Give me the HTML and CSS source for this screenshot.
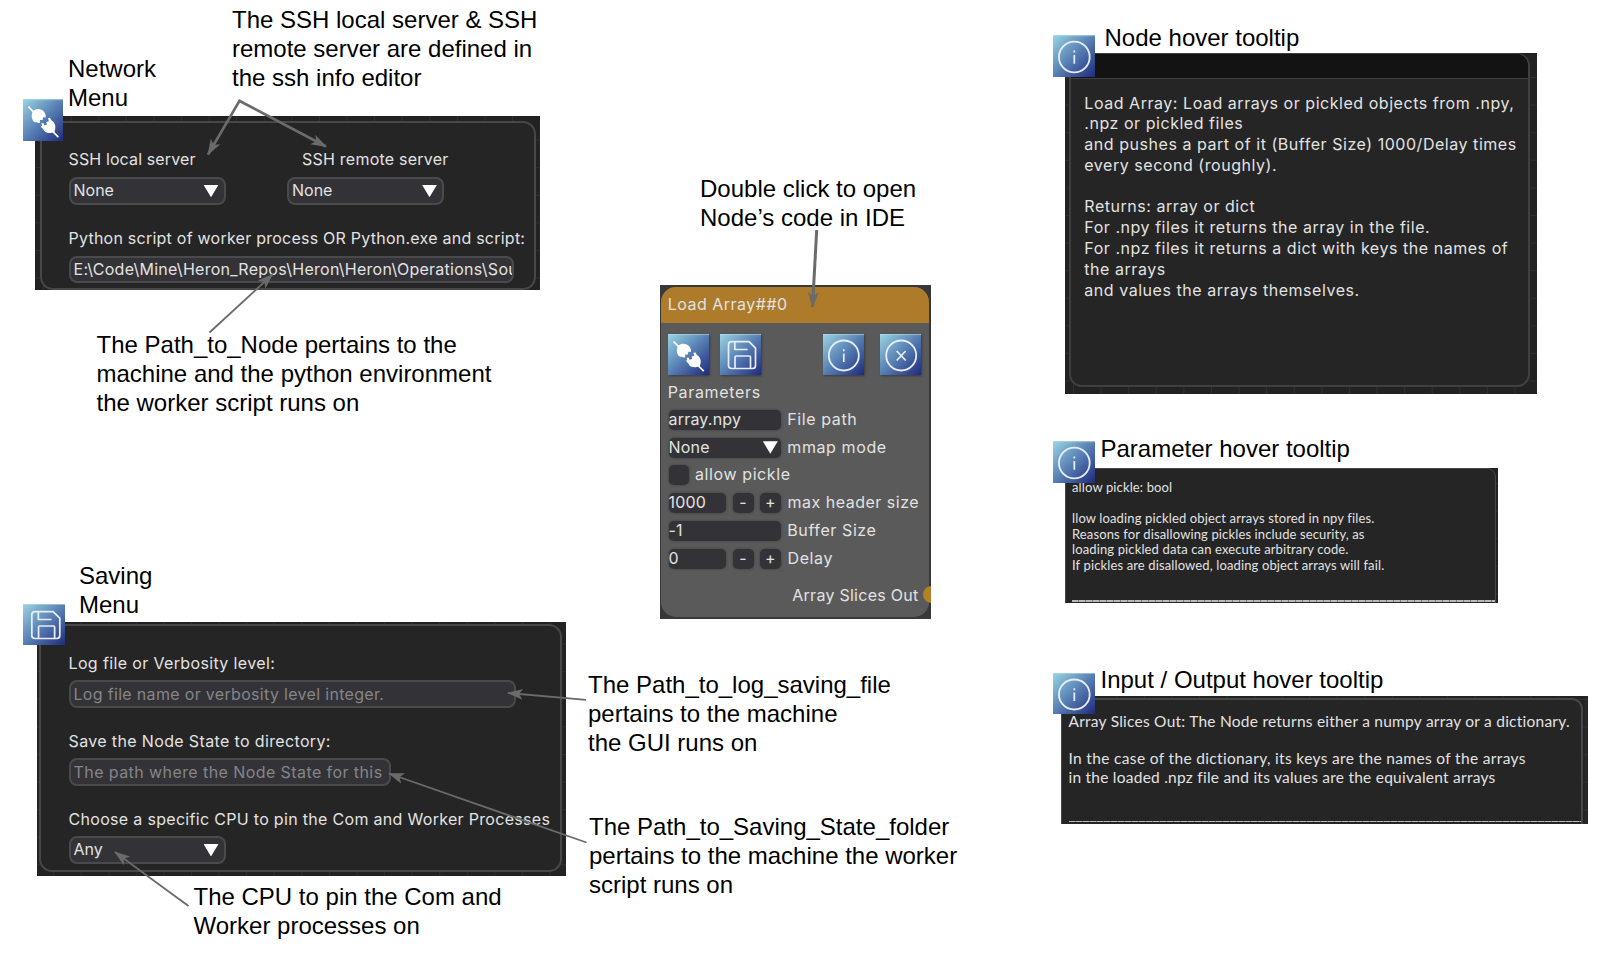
FILE: index.html
```html
<!DOCTYPE html>
<html lang="en">
<head>
<meta charset="utf-8">
<title>Node editor guide</title>
<link rel="stylesheet" href="styles.css">
</head>
<body>
<svg class="defs" aria-hidden="true">
  <defs>
    <linearGradient id="tile" x1="0" y1="0" x2="1" y2="1">
      <stop offset="0" stop-color="#9ad6e2"/>
      <stop offset=".5" stop-color="#577fb4"/>
      <stop offset="1" stop-color="#1f2a7c"/>
    </linearGradient>
    <symbol id="i-plug" viewBox="0 0 41 41" preserveAspectRatio="none">
      <rect width="41" height="41" fill="url(#tile)"/>
      <path d="M0 .6H41" stroke="#b5dbe8" stroke-opacity=".6"/>
      <path d="M5.500 7.500 12 14M30 31.500l5.800 5.600" stroke="#fff" stroke-width="1.700"/>
      <path d="M10.500 11.500c3-2.500 8-2.500 10.700.8 1.500 1.800 2 3.800 1.700 5.700l-2.600-.2-.4 2.600-2.800.2.200 2.600-2.400.3-.6-.8c-2 .4-3.500-.3-4.400-2-1.700-2.800-1.400-6.800.6-9.200z" fill="#fff"/>
      <path d="M18.500 24l2.200-.5.800 2.200 2.600-.6-.5-2.600 2.600-.8-.8-2.800 1.800-.6 1.500 2.500c3 1.500 4.400 4.600 4 7.700l-.8 3.600-3.200.9c-3.400.8-7-.3-8.400-3.600l-2.400-2.600 1.400-.8z" fill="#fff"/>
    </symbol>
    <symbol id="i-save" viewBox="0 0 41 41" preserveAspectRatio="none">
      <rect width="41" height="41" fill="url(#tile)"/>
      <path d="M0 .6H41" stroke="#b5dbe8" stroke-opacity=".6"/>
      <g fill="none" stroke="#e6edf8" stroke-width="1.700" stroke-linejoin="round">
        <path d="M11.500 7.700H29l6.500 6.500V31.500q0 3-3 3H11.500q-3 0-3-3V10.700q0-3 3-3z"/>
        <path d="M14.800 7.700V15.500H27.500M15 34.500V23q0-1 1-1H29.500q1 0 1 1V34.500"/>
      </g>
    </symbol>
    <symbol id="i-info" viewBox="0 0 41 41" preserveAspectRatio="none">
      <rect width="41" height="41" fill="url(#tile)"/>
      <path d="M0 .6H41" stroke="#b5dbe8" stroke-opacity=".6"/>
      <circle cx="20.800" cy="21.500" r="15" fill="none" stroke="#e6edf8" stroke-width="1.800"/>
      <path d="M20.800 19.500V28M20.800 15.200v2" stroke="#e6edf8" stroke-width="1.700"/>
    </symbol>
    <symbol id="i-close" viewBox="0 0 41 41" preserveAspectRatio="none">
      <rect width="41" height="41" fill="url(#tile)"/>
      <path d="M0 .6H41" stroke="#b5dbe8" stroke-opacity=".6"/>
      <circle cx="21.200" cy="21.500" r="15" fill="none" stroke="#e6edf8" stroke-width="1.800"/>
      <path d="M16.700 17l9 9.500M25.700 17l-9 9.500" stroke="#e6edf8" stroke-width="1.800"/>
    </symbol>
  </defs>
</svg>

<main class="board">
  <section class="shot network">
    <div class="frame">
      <div class="pair">
        <div class="field">
          <span class="label local">SSH local server</span>
          <div class="box select"><span>None</span><i class="caret"></i></div>
        </div>
        <div class="field">
          <span class="label remote">SSH remote server</span>
          <div class="box select"><span>None</span><i class="caret"></i></div>
        </div>
      </div>
      <div class="field">
        <span class="label script">Python script of worker process OR Python.exe and script:</span>
        <div class="box path">E:\Code\Mine\Heron_Repos\Heron\Heron\Operations\Sou</div>
      </div>
    </div>
  </section>
  <svg class="tile t-network"><use href="#i-plug"/></svg>

  <section class="shot saving">
    <div class="frame">
      <div class="field">
        <span class="label">Log file or Verbosity level:</span>
        <div class="box hint log">Log file name or verbosity level integer.</div>
      </div>
      <div class="field">
        <span class="label">Save the Node State to directory:</span>
        <div class="box hint state">The path where the Node State for this</div>
      </div>
      <div class="field">
        <span class="label cpu">Choose a specific CPU to pin the Com and Worker Processes</span>
        <div class="box select"><span>Any</span><i class="caret"></i></div>
      </div>
    </div>
  </section>
  <svg class="tile t-saving"><use href="#i-save"/></svg>

  <section class="node">
    <div class="node-body">
      <header class="node-title">Load Array##0</header>
      <div class="tools">
        <svg><use href="#i-plug"/></svg>
        <svg><use href="#i-save"/></svg>
        <svg class="push"><use href="#i-info"/></svg>
        <svg><use href="#i-close"/></svg>
      </div>
      <div class="params-title">Parameters</div>
      <div class="params">
        <div class="row"><span class="val full">array.npy</span><span>File path</span></div>
        <div class="row"><span class="val full combo">None<i class="caret"></i></span><span>mmap mode</span></div>
        <div class="row"><span class="val check"></span><span>allow pickle</span></div>
        <div class="row"><span class="val num">1000</span><span class="val step">-</span><span class="val step">+</span><span class="long">max header size</span></div>
        <div class="row"><span class="val full">-1</span><span>Buffer Size</span></div>
        <div class="row"><span class="val num">0</span><span class="val step">-</span><span class="val step">+</span><span>Delay</span></div>
      </div>
      <div class="output">Array Slices Out</div>
    </div>
    <i class="pin"></i>
  </section>

  <section class="shot tip-node">
    <div class="frame">
      <div class="tip-bar"></div>
      <div class="tip-text">Load Array: Load arrays or pickled objects from .npy,
.npz or pickled files
and pushes a part of it (Buffer Size) 1000/Delay times
every second (roughly).

Returns: array or dict
For .npy files it returns the array in the file.
For .npz files it returns a dict with keys the names of
the arrays
and values the arrays themselves.</div>
    </div>
  </section>
  <svg class="tile t-node"><use href="#i-info"/></svg>

  <section class="shot tip-param">
    <div class="frame">
      <div class="tip-text">allow pickle: bool

llow loading pickled object arrays stored in npy files.
Reasons for disallowing pickles include security, as
loading pickled data can execute arbitrary code.
If pickles are disallowed, loading object arrays will fail.</div>
      <div class="rule"></div>
    </div>
  </section>
  <svg class="tile t-param"><use href="#i-info"/></svg>

  <section class="shot tip-io">
    <div class="frame">
      <div class="tip-text">Array Slices Out: The Node returns either a numpy array or a dictionary.

<span class="wide">In the case of the dictionary, its keys are the names of the arrays</span>
in the loaded .npz file and its values are the equivalent arrays</div>
      <div class="rule"></div>
    </div>
  </section>
  <svg class="tile t-io"><use href="#i-info"/></svg>

  <p class="note n-network">Network
Menu</p>
  <p class="note n-ssh">The SSH local server &amp; SSH
remote server are defined in
the ssh info editor</p>
  <p class="note n-path">The Path_to_Node pertains to the
machine and the python environment
the worker script runs on</p>
  <p class="note n-saving">Saving
Menu</p>
  <p class="note n-log">The Path_to_log_saving_file
pertains to the machine
the GUI runs on</p>
  <p class="note n-state">The Path_to_Saving_State_folder
pertains to the machine the worker
script runs on</p>
  <p class="note n-cpu">The CPU to pin the Com and
Worker processes on</p>
  <p class="note n-open">Double click to open
Node’s code in IDE</p>
  <p class="note n-tipnode">Node hover tooltip</p>
  <p class="note n-tipparam">Parameter hover tooltip</p>
  <p class="note n-tipio">Input / Output hover tooltip</p>

  <svg class="arrows" viewBox="0 0 1608 957">
    <defs>
      <marker id="head" viewBox="0 0 16 12" refX="15" refY="6" markerWidth="16" markerHeight="12" markerUnits="userSpaceOnUse" orient="auto">
        <path d="M16 6 0 .5 4 6 0 11.500z" fill="#6b6b6b"/>
      </marker>
    </defs>
    <g fill="none" stroke="#6b6b6b" marker-end="url(#head)">
      <path d="M240 100 208 154.500" stroke-width="2.600"/>
      <path d="M238.800 100.500 326 146.500" stroke-width="2.600"/>
      <path d="M209.500 332.500 272.500 274.500" stroke-width="1.800"/>
      <path d="M586 699.800 508 693" stroke-width="1.800"/>
      <path d="M586.500 842.500 389 773.500" stroke-width="1.800"/>
      <path d="M188.500 906Q150 878 115 852" stroke-width="1.800"/>
      <path d="M816.700 230 812.500 307" stroke-width="3"/>
    </g>
  </svg>
</main>
</body>
</html>
```
FILE: styles.css
```css
* { box-sizing: border-box; }
body { margin: 0; background: #fff; }
.defs { position: absolute; width: 0; height: 0; }

.board {
  position: relative;
  width: 1608px;
  height: 957px;
  overflow: hidden;
  font: 16px/24px Inter, "Noto Sans", sans-serif;
  color: #e2e2e2;
}

/* annotations */
.note {
  position: absolute;
  margin: 0;
  white-space: pre;
  font: 24px/28.800px "Liberation Sans", Arial, sans-serif;
  color: #000;
}
.n-network  { left: 68px; top: 55px; }
.n-ssh      { left: 232px;    top: 6px; }
.n-path     { left: 96.500px; top: 331px; }
.n-saving   { left: 79px;     top: 562px; }
.n-log      { left: 588px;    top: 671px; }
.n-state    { left: 589px;    top: 813px; }
.n-cpu      { left: 193.500px; top: 883px; }
.n-open     { left: 700px;    top: 175px; }
.n-tipnode  { left: 1104.500px;   top: 24px; }
.n-tipparam { left: 1100.500px; top: 435px; }
.n-tipio    { left: 1100.500px; top: 666px; }

.arrows { position: absolute; inset: 0; width: 1608px; height: 957px; }

/* dark panels with the editor grid behind them */
.shot {
  position: absolute;
  overflow: hidden;
  background-color: #222;
  background-image:
    linear-gradient(#303030 1px, transparent 1px),
    linear-gradient(90deg, #303030 1px, transparent 1px);
  background-size: 27.6px 27.6px;
}
.frame {
  display: flex;
  flex-direction: column;
  background: #252525;
  border: 2px solid #474747;
  border-radius: 13px;
}
.network { left: 34.500px; top: 116.300px; width: 505px; height: 174px; padding: 5px 4px 0 5.500px; background-position: 8px -4px; }
.network .frame { height: 169px; padding: 24px 0 0 26.500px; gap: 21px; letter-spacing: .23px; }
.saving { left: 37px; top: 621.500px; width: 529px; height: 254px; padding: 2px 4.500px 3.500px 2px; background-position: 16px -6px; }
.saving .frame { height: 248.500px; padding: 25px 0 0 27.500px; gap: 21.200px; letter-spacing: .36px; }
.saving .field { gap: 5.500px; }

.tile { position: absolute; width: 42px; height: 42px; overflow: hidden; }
.t-network { left: 22.500px; top: 99px; width: 40.500px; }
.t-saving  { left: 22.500px; top: 604px; width: 42.500px; height: 41px; }
.t-node    { left: 1052.500px; top: 35px; }
.t-param   { left: 1052.500px; top: 440.500px; }
.t-io      { left: 1052.500px; top: 672.500px; height: 41px; }

.pair { display: flex; gap: 61.500px; }
.field { display: flex; flex-direction: column; gap: 6px; }
.label { white-space: nowrap; }
.label.local { letter-spacing: .12px; }
.label.remote { padding-left: 15px; }
.label.script { letter-spacing: .24px; }
.label.cpu { letter-spacing: .31px; }
.box {
  height: 27.500px;
  line-height: 23.500px;
  padding-left: 3px;
  background: #333337;
  border: 2px solid #4a4a4c;
  border-radius: 8px;
  overflow: hidden;
  white-space: nowrap;
}
.select {
  display: flex;
  justify-content: space-between;
  align-items: center;
  width: 157px;
  padding-right: 5px;
  letter-spacing: 0;
}
.caret {
  width: 15px;
  height: 12.500px;
  background: #fff;
  clip-path: polygon(0 0, 100% 0, 50% 100%);
}
.path { width: 445.500px; letter-spacing: .27px; }
.hint { color: #858587; line-height: 25px; }
.log { width: 447.500px; letter-spacing: .32px; }
.state { width: 322.500px; letter-spacing: .42px; }

/* node */
.node {
  position: absolute;
  left: 659.500px;
  top: 285.300px;
  width: 271.200px;
  height: 333.400px;
  padding: 1.500px 2.200px 2px 1px;
  background: #383838;
  overflow: hidden;
}
.node-body {
  height: 330px;
  background: #5a5a5a;
  border-radius: 15px;
  overflow: hidden;
  letter-spacing: .5px;
}
.node-title {
  height: 36.500px;
  padding: 5px 0 0 7.200px;
  background: #ad7b2a;
}
.tools {
  display: flex;
  gap: 11px;
  padding: 10.500px 7.200px 0 7.500px;
}
.tools svg { width: 41px; height: 41px; box-shadow: 1px 1px 2px #3c3c3c; }
.tools .push { margin: 0 5.500px 0 auto; }
.params-title { padding: 5.500px 0 0 7.200px; letter-spacing: .68px; }
.params { display: flex; flex-direction: column; gap: 7.750px; padding: 5.500px 0 0 8px; }
.row { display: flex; height: 20px; line-height: 19px; gap: 6.500px; white-space: nowrap; letter-spacing: .6px; }
.long { letter-spacing: .5px; }
.val {
  background: #333337;
  border-radius: 5px;
  box-shadow: 0 0 2px 1px #4c4c4e;
  letter-spacing: .2px;
}
.full { width: 112.300px; }
.combo { display: flex; justify-content: space-between; align-items: center; padding-right: 3px; }
.check { width: 20px; }
.num { width: 57.500px; }
.step { width: 21px; text-align: center; }
.output { padding: 14px 10px 0 0; text-align: right; letter-spacing: .27px; }
.pin {
  position: absolute;
  left: 263px;
  top: 300.500px;
  width: 17px;
  height: 17px;
  border-radius: 50%;
  background: #b58127;
}

/* tooltips */
.tip-text { white-space: pre; }
.tip-node { left: 1065px; top: 53px; width: 472px; height: 341.300px; padding: 0 7.500px 8px 4px; background-position: 8px 24px; }
.tip-node .frame { height: 334px; border-top-width: 1px; border-color: #404040; overflow: hidden; }
.tip-bar { height: 24.500px; background: #131313; border-bottom: 1.500px solid #404040; flex: none; }
.tip-node .tip-text { padding: 14px 0 0 13.300px; line-height: 20.800px; letter-spacing: .54px; }

.tip-param { left: 1065px; top: 467.500px; width: 433px; height: 135px; padding: .7px 2.500px 0 0; background-position: 0 15px; }
.tip-param .frame { height: 150px; border-radius: 0 9px 0 0; border-width: 1.500px; }
.tip-param .tip-text { padding: 11px 0 0 6px; font: 13px/15.500px Lato, sans-serif; letter-spacing: .13px; }

.tip-io { left: 1060.500px; top: 696px; width: 527px; height: 127.700px; padding: 1.500px 4.500px 0 0; background-position: 0 3px; }
.tip-io .frame { height: 150px; border-radius: 0 11px 0 0; border-left-width: 1px; }
.tip-io .tip-text { padding: 12px 0 0 7px; font: 15.500px/18.850px Lato, sans-serif; letter-spacing: .24px; }
.wide { letter-spacing: .34px; }

.rule {
  height: 1.500px;
  background: repeating-linear-gradient(90deg, #b8b8b8 0 6px, #808080 6px 7px);
}
.tip-param .rule { margin: 27px 0 0 6px; }
.tip-io .rule { margin: 34px 0 0 7px; }
```
